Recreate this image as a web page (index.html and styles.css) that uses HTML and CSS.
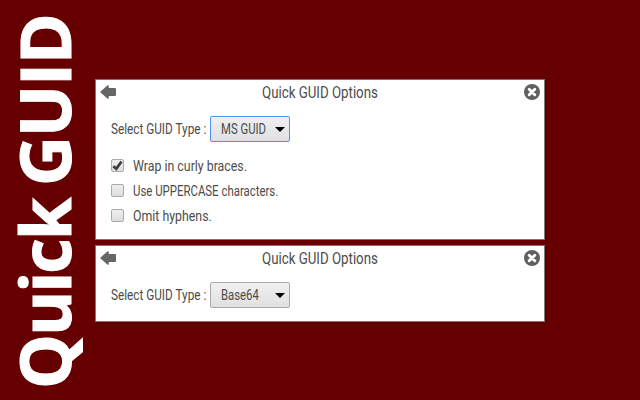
FILE: index.html
```
<!DOCTYPE html>
<html lang="en">
<head>
<meta charset="utf-8">
<title>Quick GUID</title>
<link rel="stylesheet" href="styles.css">
</head>
<body>
<svg class="defs" width="0" height="0" aria-hidden="true">
  <symbol id="back" viewBox="0 0 16 14"><path d="M0 7 7.300 .4Q8.800 -.4 8.800 1.200V3H15Q16 3 16 4V10Q16 11 15 11H8.800V12.800Q8.800 14.400 7.300 13.600Z"/></symbol>
  <symbol id="close" viewBox="0 0 16 16"><circle cx="8" cy="8" r="8"/><path d="M5.200 5.200 10.800 10.800M10.800 5.200 5.200 10.800" stroke="#fff" stroke-width="2.900" stroke-linecap="round"/></symbol>
</svg>
<aside class="brand"><h1><span class="quick">Quick</span> <span class="guid">GUID</span></h1></aside>
<main class="panels">
  <section class="panel panel-ms">
    <header class="bar">
      <svg class="back"><use href="#back"/></svg>
      <h2><span class="t title">Quick GUID Options</span></h2>
      <svg class="close"><use href="#close"/></svg>
    </header>
    <div class="type">
      <div class="label"><span class="t l-type">Select GUID Type :</span></div>
      <button class="select focused"><span class="t l-ms">MS GUID</span><i class="caret"></i></button>
    </div>
    <div class="options">
      <div class="option"><span class="box"><svg width="11" height="11" viewBox="0 0 11 11"><path d="M1.300 6.200 4.300 8.800 9.500 1.500" fill="none" stroke="#3c3c3c" stroke-width="2.700"/></svg></span><span class="t l-wrap">Wrap in curly braces.</span></div>
      <div class="option"><span class="box"></span><span class="t l-upper">Use UPPERCASE characters.</span></div>
      <div class="option"><span class="box"></span><span class="t l-omit">Omit hyphens.</span></div>
    </div>
  </section>
  <section class="panel panel-base">
    <header class="bar">
      <svg class="back"><use href="#back"/></svg>
      <h2><span class="t title">Quick GUID Options</span></h2>
      <svg class="close"><use href="#close"/></svg>
    </header>
    <div class="type">
      <div class="label"><span class="t l-type">Select GUID Type :</span></div>
      <button class="select"><span class="t l-base">Base64</span><i class="caret"></i></button>
    </div>
  </section>
</main>
</body>
</html>
```
FILE: styles.css
```
* { box-sizing: border-box; }
body {
  margin: 0;
  width: 640px;
  height: 400px;
  display: flex;
  overflow: hidden;
  background: #600;
  color: #4c4c4c;
  font: 14px/20px Roboto, sans-serif;
}
.defs { position: absolute; }
.brand { width: 95px; height: 400px; flex: none; }
h1 {
  margin: 0;
  width: 88px;
  height: 389px;
  writing-mode: vertical-rl;
  transform: rotate(180deg);
  font: bold 69px/88px "Open Sans", sans-serif;
  letter-spacing: -2px;
  word-spacing: -2.5px;
  color: #fff;
  -webkit-text-stroke: 1px #fff;
  white-space: nowrap;
}
.guid { letter-spacing: -1.1px; }
.panels { width: 450px; padding-top: 79px; display: flex; flex-direction: column; gap: 5px; }
.panel { width: 450px; background: #fff; border: 1px solid #777; }
.panel-ms { height: 161px; }
.panel-base { height: 77px; }
.bar { height: 26px; padding: 0 4px; display: flex; align-items: center; justify-content: space-between; }
.back { width: 16px; height: 14px; margin-top: -2px; fill: #666; overflow: visible; }
.close { width: 16px; height: 16px; margin-top: -2px; fill: #606060; }
h2 { margin: 0; width: 116px; font: 16px/24px Roboto, sans-serif; }
.t { display: inline-block; white-space: nowrap; transform-origin: 0 50%; }
.title { transform: scaleX(.83); }
.l-type { transform: scaleX(.84); }
.l-ms, .l-base { transform: scaleX(.81); }
.l-wrap, .l-omit { transform: scaleX(.882); }
.l-upper { transform: scaleX(.815); }
.type { display: flex; align-items: center; height: 26px; margin: 10px 0 0 15px; }
.label { width: 99px; }
.select {
  width: 80px;
  height: 26px;
  padding: 0 4px 0 10px;
  display: flex;
  align-items: center;
  justify-content: space-between;
  border: 1px solid #aaa;
  border-radius: 2px;
  background: linear-gradient(#f0f0f0, #e0e0e0);
  color: #4c4c4c;
  font: 14px/20px Roboto, sans-serif;
}
.select .t { width: 46px; text-align: left; }
.focused { border-color: #4d90fe; }
.caret { border: 5px solid transparent; border-top-color: #000; border-bottom: 0; }
.options { margin: 11px 0 0 15px; }
.option { height: 25px; display: flex; align-items: center; gap: 9px; }
.box {
  width: 13px;
  height: 13px;
  display: flex;
  border: 1px solid #aaa;
  border-radius: 2px;
  background: linear-gradient(#eee, #dedede);
}
```
